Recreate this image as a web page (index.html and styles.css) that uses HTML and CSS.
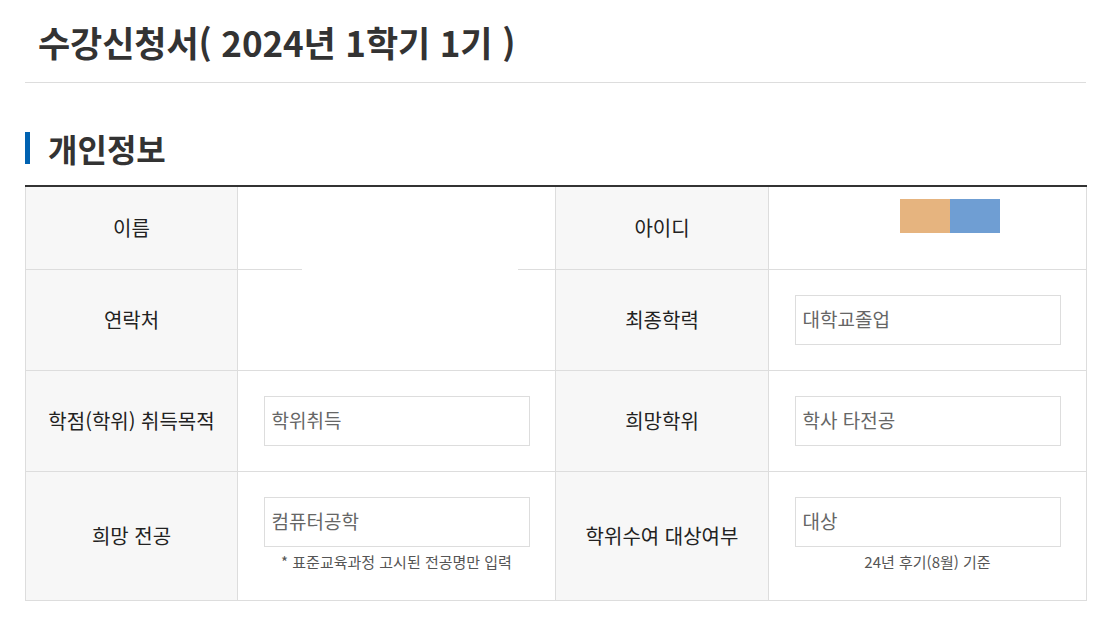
FILE: index.html
```html
<!DOCTYPE html>
<html lang="ko">
<head>
	<meta charset="utf-8">
	<title>수강신청서</title>
	<link rel="stylesheet" href="styles.css">
</head>
<body>
	<div class="page">
		<h1 class="doc-title">수강신청서( 2024년 1학기 1기 )</h1>

		<h2 class="sec-title">개인정보</h2>

		<table class="infotbl">
			<colgroup>
				<col class="c-label">
				<col class="c-value">
				<col class="c-label2">
				<col class="c-value">
			</colgroup>
			<tr class="r-first">
				<th>이름</th>
				<td class="name-cell"><span class="mask"></span></td>
				<th>아이디</th>
				<td class="id-cell">
					<div class="swatches">
						<span class="sw sw-orange"></span><span class="sw sw-blue"></span>
					</div>
				</td>
			</tr>
			<tr>
				<th>연락처</th>
				<td></td>
				<th>최종학력</th>
				<td><input class="field" type="text" value="대학교졸업" readonly></td>
			</tr>
			<tr>
				<th>학점(학위) 취득목적</th>
				<td><input class="field" type="text" value="학위취득" readonly></td>
				<th>희망학위</th>
				<td><input class="field" type="text" value="학사 타전공" readonly></td>
			</tr>
			<tr>
				<th>희망 전공</th>
				<td class="with-note">
					<input class="field" type="text" value="컴퓨터공학" readonly>
					<p class="note">* 표준교육과정 고시된 전공명만 입력</p>
				</td>
				<th>학위수여 대상여부</th>
				<td class="with-note">
					<input class="field" type="text" value="대상" readonly>
					<p class="note">24년 후기(8월) 기준</p>
				</td>
			</tr>
		</table>
	</div>
</body>
</html>
```

FILE: styles.css
```css
body {
	margin: 0;
	background: #fff;
	color: #222;
	font-family: "Noto Sans CJK KR", "Noto Sans", sans-serif;
}
.page {
	width: 1061px;
	padding-left: 25px;
}
.doc-title {
	margin: 0;
	padding: 19px 13px 17px;
	font-size: 35px;
	line-height: 46px;
	font-weight: 700;
	color: #333;
	letter-spacing: -0.1px;
	border-bottom: 1px solid #ddd;
}
.sec-title {
	display: flex;
	align-items: center;
	margin: 48px 0 20px;
	font-size: 32px;
	line-height: 34px;
	font-weight: 700;
	color: #333;
}
.sec-title::before {
	content: "";
	width: 5px;
	height: 32px;
	margin-right: 18px;
	background: #0062b1;
}
.infotbl {
	width: 1061px;
	table-layout: fixed;
	border-collapse: collapse;
	border-top: 2px solid #333;
}
.c-label {
	width: 212px;
}
.c-label2 {
	width: 213px;
}
.c-value {
	width: 318px;
}
.infotbl th,
.infotbl td {
	border: 1px solid #ddd;
	font-size: 20px;
	line-height: 26px;
	text-align: center;
	vertical-align: middle;
	padding: 25px 0;
}
.infotbl th {
	background: #f7f7f7;
	font-weight: 400;
	color: #222;
}
.infotbl tr:first-child th,
.infotbl tr:first-child td {
	border-top: 2px solid #333;
}
.r-first th,
.r-first td {
	height: 32px;
}
.name-cell {
	position: relative;
}
.mask {
	position: absolute;
	left: 64px;
	bottom: -1px;
	width: 216px;
	height: 1px;
	background: #fff;
}
.infotbl .id-cell {
	vertical-align: top;
	text-align: left;
	padding: 12px 0 0 131px;
}
.swatches {
	display: flex;
}
.sw {
	width: 50px;
	height: 34px;
}
.sw-orange {
	background: #e6b47f;
}
.sw-blue {
	background: #6f9ed3;
}
.field {
	display: block;
	box-sizing: border-box;
	width: 266px;
	height: 50px;
	margin: 0 auto;
	padding: 0 7px 3px;
	border: 1px solid #ddd;
	background: #fff;
	font-family: "Noto Sans CJK KR", "Noto Sans", sans-serif;
	font-size: 19px;
	color: #666;
	outline: none;
}
.infotbl .with-note {
	padding: 25px 0 28px;
}
.note {
	margin: 5px 0 0;
	font-size: 15px;
	line-height: 20px;
	color: #555;
}
```
